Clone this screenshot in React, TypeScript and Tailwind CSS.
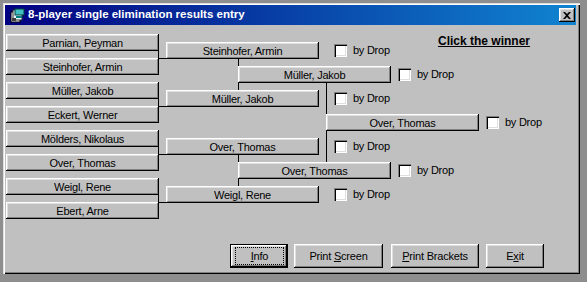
import React from "react";

const FONT = "font-['Liberation_Sans',Arial,sans-serif]";
const BEVEL =
  "shadow-[inset_-1px_-1px_0_#000,inset_1px_1px_0_#fff,inset_-2px_-2px_0_#808080,inset_2px_2px_0_#dfdfdf]";
const SUNKEN =
  "shadow-[inset_1px_1px_0_#808080,inset_2px_2px_0_#000,inset_-1px_-1px_0_#fff,inset_-2px_-2px_0_#dfdfdf]";

const round1 = [
  "Parnian, Peyman",
  "Steinhofer, Armin",
  "Müller, Jakob",
  "Eckert, Werner",
  "Mölders, Nikolaus",
  "Over, Thomas",
  "Weigl, Rene",
  "Ebert, Arne",
];
const round2 = ["Steinhofer, Armin", "Müller, Jakob", "Over, Thomas", "Weigl, Rene"];
const round3 = ["Müller, Jakob", "Over, Thomas"];
const finalWinner = "Over, Thomas";

function Node({ x, y, label }: { x: number; y: number; label: string }) {
  return (
    <div
      className={`absolute w-[153px] h-[17px] bg-[#c0c0c0] ${BEVEL} flex items-center justify-center text-[11px] tracking-[-0.25px] leading-none text-black pt-[1px]`}
      style={{ left: x, top: y }}
    >
      {label}
    </div>
  );
}

function Drop({ x, y }: { x: number; y: number }) {
  return (
    <div className="absolute flex items-center gap-[6px]" style={{ left: x, top: y }}>
      <div className={`w-[13px] h-[13px] bg-white ${SUNKEN}`} />
      <span className="text-[11px] tracking-[-0.25px] leading-none text-black">by Drop</span>
    </div>
  );
}

function Line({ x, y, w, h }: { x: number; y: number; w: number; h: number }) {
  return <div className="absolute bg-black" style={{ left: x, top: y, width: w, height: h }} />;
}

function CmdButton({
  width,
  children,
  isDefault,
}: {
  width: string;
  children: React.ReactNode;
  isDefault?: boolean;
}) {
  if (isDefault) {
    return (
      <div className={`${width} h-[24px] border border-black bg-[#c0c0c0] flex`}>
        <div className={`flex-1 flex ${BEVEL} p-[2px_3px_2px_4px]`}>
          <div className="flex-1 border border-dotted border-black flex items-center justify-center text-[11px] tracking-[-0.2px] text-black">
            {children}
          </div>
        </div>
      </div>
    );
  }
  return (
    <div
      className={`${width} h-[24px] bg-[#c0c0c0] ${BEVEL} flex items-center justify-center text-[11px] tracking-[-0.2px] text-black`}
    >
      {children}
    </div>
  );
}

export default function App() {
  return (
    <div className={`w-[587px] h-[282px] bg-[#8e8e8e] overflow-hidden ${FONT}`}>
      <div className="pt-[3px] pl-[3px]">
        <div
          className="w-[577px] h-[271px] bg-[#c0c0c0] shadow-[inset_1px_1px_0_#dfdfdf,inset_2px_2px_0_#fff,inset_-1px_-1px_0_#000,inset_-2px_-2px_0_#808080] pt-[2px] pl-[2px] pr-[4px] pb-[2px] flex flex-col"
        >
          {/* Title bar */}
          <div className="h-[20px] flex items-center bg-[linear-gradient(to_right,#000080,#1084d0)] pl-[5px] pr-[1px]">
            <svg width="15" height="15" viewBox="0 0 15 15" className="shrink-0">
              <rect x="1" y="4" width="9" height="10" fill="#ffffff" stroke="#000" strokeWidth="1" />
              <rect x="3" y="2" width="9" height="10" fill="#e8f8ff" stroke="#303030" strokeWidth="1" />
              <rect x="5" y="1" width="9" height="6" fill="#40c0c0" stroke="#004040" strokeWidth="1" />
              <rect x="6" y="8" width="6" height="2" fill="#008080" />
              <rect x="2" y="10" width="4" height="3" fill="#404040" />
            </svg>
            <span className="ml-[3px] text-white font-bold text-[11.5px] leading-none whitespace-nowrap">
              8-player single elimination results entry
            </span>
            <div className="flex-1" />
            <div className={`w-[16px] h-[14px] bg-[#c0c0c0] ${BEVEL} flex items-center justify-center`}>
              <svg width="8" height="7" viewBox="0 0 8 7">
                <path d="M0 0 L2 0 L4 2 L6 0 L8 0 L5 3.5 L8 7 L6 7 L4 5 L2 7 L0 7 L3 3.5 Z" fill="#000" />
              </svg>
            </div>
          </div>

          {/* Content */}
          <div className="relative flex-1 flex flex-col">
            {/* bracket connectors */}
            {[0, 1, 2, 3].map((j) => (
              <React.Fragment key={`l1-${j}`}>
                <Line x={153} y={9 + 48 * j} w={1} h={41} />
                <Line x={153} y={33 + 48 * j} w={9} h={1} />
              </React.Fragment>
            ))}
            {[0, 1].map((j) => (
              <Line key={`l2-${j}`} x={233} y={33 + 96 * j} w={1} h={33} />
            ))}
            <Line x={321} y={57} w={1} h={81} />

            {round1.map((n, i) => (
              <Node key={`r1-${i}`} x={1} y={9 + 24 * i} label={n} />
            ))}
            {round2.map((n, j) => (
              <React.Fragment key={`r2-${j}`}>
                <Node x={161} y={17 + 48 * j} label={n} />
                <Drop x={329} y={19 + 48 * j} />
              </React.Fragment>
            ))}
            {round3.map((n, j) => (
              <React.Fragment key={`r3-${j}`}>
                <Node x={233} y={41 + 96 * j} label={n} />
                <Drop x={393} y={43 + 96 * j} />
              </React.Fragment>
            ))}
            <Node x={321} y={89} label={finalWinner} />
            <Drop x={481} y={91} />

            <div className="absolute left-[433px] top-[9px] text-[12px] font-bold underline leading-[14px] text-black">
              Click the winner
            </div>

            {/* command buttons */}
            <div className="mt-auto flex justify-end pr-[32px] pb-[4px]">
              <CmdButton width="w-[58px]" isDefault>
                <span>
                  <u>I</u>nfo
                </span>
              </CmdButton>
              <div className="ml-[6px]">
                <CmdButton width="w-[89px]">
                  <span>
                    Print <u>S</u>creen
                  </span>
                </CmdButton>
              </div>
              <div className="ml-[8px]">
                <CmdButton width="w-[88px]">
                  <span>
                    <u>P</u>rint Brackets
                  </span>
                </CmdButton>
              </div>
              <div className="ml-[7px]">
                <CmdButton width="w-[58px]">
                  <span>
                    E<u>x</u>it
                  </span>
                </CmdButton>
              </div>
            </div>
          </div>
        </div>
      </div>
    </div>
  );
}
